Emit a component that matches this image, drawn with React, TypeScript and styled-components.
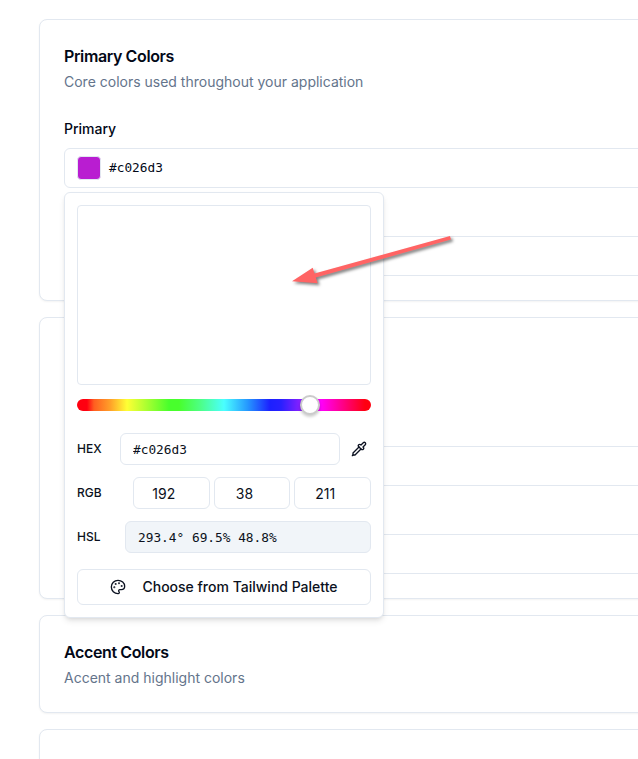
import React from "react";
import styled, { createGlobalStyle } from "styled-components";
import { Palette } from "lucide-react";

const border = "#e2e8f0";
const ink = "#020817";
const mono = `"DejaVu Sans Mono", monospace`;

const GlobalStyle = createGlobalStyle`
  *, *::before, *::after { box-sizing: border-box; }
  html, body { margin: 0; background: #fff; overflow: hidden; }
  body { font-family: Inter, sans-serif; color: ${ink}; font-size: 14px; line-height: 20px; }
  input, button { font: inherit; color: inherit; margin: 0; }
`;

const Page = styled.main`
  display: flex;
  flex-direction: column;
  gap: 16px;
  width: 638px;
  height: 759px;
  padding: 19px 0 0 39px;
  overflow: hidden;
`;

const Card = styled.section`
  flex: none;
  width: 720px;
  min-height: 98px;
  padding: 24px;
  border: 1px solid ${border};
  border-radius: 8px;
  background: #fff;
  box-shadow: 0 1px 2px rgba(0, 0, 0, 0.05);
`;

const CardTitle = styled.h3`
  margin: 0;
  font-size: 16px;
  line-height: 24px;
  font-weight: 600;
  letter-spacing: -0.38px;
`;

const CardText = styled.p`
  margin: 4px 0 0;
  color: #64748b;
`;

const Fields = styled.div`
  display: flex;
  flex-direction: column;
  gap: 19px;
  margin-top: 27px;
`;

const Field = styled.div`
  position: relative;
  display: flex;
  flex-direction: column;
  gap: 10px;
`;

const FieldLabel = styled.label`
  font-weight: 500;
  line-height: 19px;
`;

const ColorTrigger = styled.div`
  display: flex;
  align-items: center;
  gap: 8px;
  height: 40px;
  padding: 0 12px;
  border: 1px solid ${border};
  border-radius: 6px;
  font: 12.8px/20px ${mono};
`;

const Swatch = styled.span<{ $color: string }>`
  width: 24px;
  height: 24px;
  border: 1px solid ${border};
  border-radius: 4px;
  background: ${(p) => p.$color};
`;

const Popover = styled.div`
  position: absolute;
  top: 73px;
  left: 0;
  z-index: 2;
  display: flex;
  flex-direction: column;
  width: 320px;
  height: 426px;
  padding: 12px;
  border: 1px solid ${border};
  border-radius: 6px;
  background: #fff;
  color: #0b1120;
  box-shadow: 0 4px 6px -1px rgba(0, 0, 0, 0.1), 0 2px 4px -2px rgba(0, 0, 0, 0.1);
`;

const Saturation = styled.div`
  height: 180px;
  border: 1px solid ${border};
  border-radius: 4px;
`;

const HueTrack = styled.div`
  position: relative;
  height: 12px;
  margin: 14px 0 22px;
  border-radius: 6px;
  background: linear-gradient(to right, #ff0010 0 10px, #ff5e20 17px, #ff9f29 33px, #ffff35 50px,
    #48ff2c 92px, #48ff2c 102px, #4dff80 122px, #4affff 147px, #2596ff 171px, #1c20ff 193px,
    #2820ff 204px, #9020ff 225px, #ff00fb 244px, #ff0090 264px, #ff0010 288px);
`;

const HueThumb = styled.span`
  position: absolute;
  top: -4px;
  left: 223px;
  width: 20px;
  height: 20px;
  border: 2px solid #cbcbcb;
  border-radius: 50%;
  background: #fff;
  box-shadow: 0 2px 3px rgba(0, 0, 0, 0.2);
`;

const ValueRow = styled.div`
  display: flex;
  align-items: center;
  height: 32px;
  margin-bottom: 12px;
`;

const ValueLabel = styled.label<{ $width: number }>`
  flex: none;
  width: ${(p) => p.$width}px;
  font-size: 12px;
  line-height: 16px;
  font-weight: 450;
`;

const ValueInput = styled.input<{ $mono?: boolean; $muted?: boolean }>`
  flex: 1;
  min-width: 0;
  height: 32px;
  padding: ${(p) => (p.$mono ? "0 12px" : "0 15px 0 0")};
  text-align: ${(p) => (p.$mono ? "left" : "center")};
  border: 1px solid ${border};
  border-radius: 6px;
  outline: none;
  background: ${(p) => (p.$muted ? "#f1f5f9" : "#fff")};
  ${(p) => p.$mono && `font: 12.8px/20px ${mono};`}
`;

const Channels = styled.div`
  display: grid;
  grid-template-columns: repeat(3, 1fr);
  gap: 4px;
  flex: 1;
`;

const PickerButton = styled.button`
  display: flex;
  align-items: center;
  justify-content: flex-end;
  width: 31px;
  height: 32px;
  padding: 0 4px 0 0;
  border: 0;
  background: none;
`;

const PaletteButton = styled.button`
  display: flex;
  align-items: center;
  justify-content: center;
  gap: 16px;
  height: 36px;
  margin-top: 4px;
  padding: 0;
  border: 1px solid ${border};
  border-radius: 6px;
  background: #fff;
  font-weight: 500;
`;

const Arrow = styled.svg`
  position: absolute;
  top: 226px;
  left: 282px;
  z-index: 3;
  filter: drop-shadow(2px 2px 1.5px rgba(0, 0, 0, 0.5));
`;

function PipetteIcon() {
  return (
    <svg
      width="16"
      height="16"
      viewBox="0 0 24 24"
      fill="none"
      stroke="currentColor"
      strokeWidth="2"
      strokeLinecap="round"
      strokeLinejoin="round"
    >
      <path d="m2 22 1-1h3l9-9" />
      <path d="M3 21v-3l9-9" />
      <path d="m15 6 3.4-3.4a2.1 2.1 0 1 1 3 3L18 9l.4.4a2.1 2.1 0 1 1-3 3l-3.8-3.8a2.1 2.1 0 1 1 3-3l.4.4Z" />
    </svg>
  );
}

type ColorFieldProps = {
  label: string;
  value: string;
  swatch?: string;
  children?: React.ReactNode;
};

function ColorField({ label, value, swatch = value, children }: ColorFieldProps) {
  return (
    <Field>
      <FieldLabel>{label}</FieldLabel>
      <ColorTrigger>
        <Swatch $color={swatch} />
        {value}
      </ColorTrigger>
      {children}
    </Field>
  );
}

function ColorPopover() {
  return (
    <Popover>
      <Saturation />
      <HueTrack>
        <HueThumb />
      </HueTrack>
      <ValueRow>
        <ValueLabel $width={43}>HEX</ValueLabel>
        <ValueInput $mono defaultValue="#c026d3" />
        <PickerButton aria-label="Pick a color">
          <PipetteIcon />
        </PickerButton>
      </ValueRow>
      <ValueRow>
        <ValueLabel $width={56}>RGB</ValueLabel>
        <Channels>
          {["192", "38", "211"].map((value) => (
            <ValueInput key={value} defaultValue={value} />
          ))}
        </Channels>
      </ValueRow>
      <ValueRow>
        <ValueLabel $width={48}>HSL</ValueLabel>
        <ValueInput $mono $muted readOnly value="293.4° 69.5% 48.8%" />
      </ValueRow>
      <PaletteButton>
        <Palette size={16} />
        Choose from Tailwind Palette
      </PaletteButton>
    </Popover>
  );
}

export default function App() {
  return (
    <>
      <GlobalStyle />
      <Page>
        <Card>
          <CardTitle>Primary Colors</CardTitle>
          <CardText>Core colors used throughout your application</CardText>
          <Fields>
            <ColorField label="Primary" value="#c026d3" swatch="#b91dd1">
              <ColorPopover />
            </ColorField>
            <ColorField label="Primary Foreground" value="#ffffff" />
          </Fields>
        </Card>
        <Card>
          <CardTitle>Secondary Colors</CardTitle>
          <CardText>Supporting colors for your application</CardText>
          <Fields>
            <ColorField label="Secondary" value="#f1f5f9" />
            <ColorField label="Secondary Foreground" value="#0f172a" />
          </Fields>
        </Card>
        <Card>
          <CardTitle>Accent Colors</CardTitle>
          <CardText>Accent and highlight colors</CardText>
        </Card>
        <Card />
      </Page>
      <Arrow width="180" height="70" viewBox="282 226 180 70">
        <polygon
          points="292,281.3 312.7,267.7 314.5,273.6 450,236 451,239.6 315.8,277.4 317.7,283.2"
          fill="#ff6464"
        />
      </Arrow>
    </>
  );
}
